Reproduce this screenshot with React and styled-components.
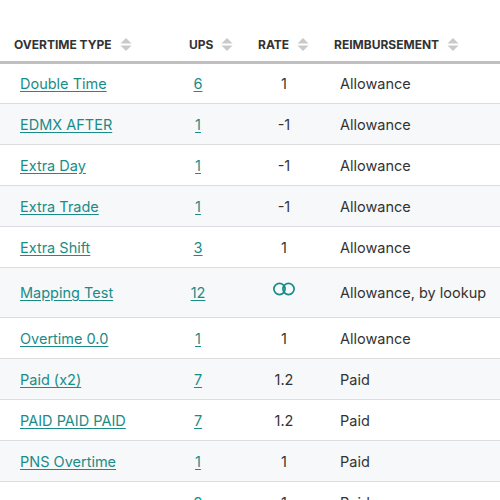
import React from "react";
import styled, { createGlobalStyle } from "styled-components";

const Global = createGlobalStyle`
  body { margin: 0; background: #fff; font-family: Inter, "Noto Sans", sans-serif; overflow: hidden; }
`;

const Table = styled.table`
  width: 500px;
  border-collapse: collapse;
  table-layout: fixed;
`;

const Th = styled.th`
  text-align: left;
  padding: 37px 0 9px ${(p) => p.$pl}px;
  font-size: 12px;
  font-weight: 700;
  color: #333;
  border-bottom: 3px solid #c0c0c0;
  white-space: nowrap;
`;

const HeadInner = styled.span`
  display: inline-flex;
  align-items: center;
  gap: 8px;
`;

const Tr = styled.tr`
  background: ${(p) => (p.$alt ? "#f7f8fa" : "#fff")};
  height: ${(p) => p.$h}px;
  border-bottom: 1px solid #dcdde0;
`;

const Td = styled.td`
  padding: 0 0 0 ${(p) => p.$pl}px;
  font-size: 14.5px;
  color: #333;
  white-space: nowrap;
`;

const Link = styled.a`
  color: #1a8c88;
  text-decoration: underline;
  text-underline-offset: 2px;
`;

const Center = styled.span`
  display: inline-block;
  width: ${(p) => p.$w}px;
  text-align: center;
`;

const Sort = () => (
  <svg width="12" height="15" viewBox="0 0 12 15">
    <path d="M0.5 6.5 L6 1 L11.5 6.5 Z" fill="#c9c9c9" />
    <path d="M0.5 8.5 L6 14 L11.5 8.5 Z" fill="#c9c9c9" />
  </svg>
);

const Inf = () => (
  <svg width="22" height="16" viewBox="0 0 22 16" style={{ verticalAlign: "5px" }}>
    <circle cx="6.5" cy="8" r="5.6" fill="none" stroke="#1a8c88" strokeWidth="1.7" />
    <circle cx="15.5" cy="8" r="5.6" fill="none" stroke="#1a8c88" strokeWidth="1.7" />
  </svg>
);

const rows = [
  ["Double Time", "6", "1", "Allowance"],
  ["EDMX AFTER", "1", "-1", "Allowance"],
  ["Extra Day", "1", "-1", "Allowance"],
  ["Extra Trade", "1", "-1", "Allowance"],
  ["Extra Shift", "3", "1", "Allowance"],
  ["Mapping Test", "12", "inf", "Allowance, by lookup"],
  ["Overtime 0.0", "1", "1", "Allowance"],
  ["Paid (x2)", "7", "1.2", "Paid"],
  ["PAID PAID PAID", "7", "1.2", "Paid"],
  ["PNS Overtime", "1", "1", "Paid"],
  ["wwww", "9", "1", "Paid"],
];

export default function App() {
  return (
    <>
      <Global />
      <Table>
        <colgroup>
          <col style={{ width: 175 }} />
          <col style={{ width: 75 }} />
          <col style={{ width: 78 }} />
          <col />
        </colgroup>
        <thead>
          <tr>
            <Th $pl={14}><HeadInner>OVERTIME TYPE<Sort /></HeadInner></Th>
            <Th $pl={14}><HeadInner>UPS<Sort /></HeadInner></Th>
            <Th $pl={8}><HeadInner>RATE<Sort /></HeadInner></Th>
            <Th $pl={6}><HeadInner>REIMBURSEMENT<Sort /></HeadInner></Th>
          </tr>
        </thead>
        <tbody>
          {rows.map((r, i) => (
            <Tr key={i} $alt={i % 2 === 1} $h={r[2] === "inf" ? 50 : 41}>
              <Td $pl={20}><Link>{r[0]}</Link></Td>
              <Td $pl={13}><Center $w={20}><Link>{r[1]}</Link></Center></Td>
              <Td $pl={8}><Center $w={52}>{r[2] === "inf" ? <Inf /> : r[2]}</Center></Td>
              <Td $pl={12}>{r[3]}</Td>
            </Tr>
          ))}
        </tbody>
      </Table>
    </>
  );
}
